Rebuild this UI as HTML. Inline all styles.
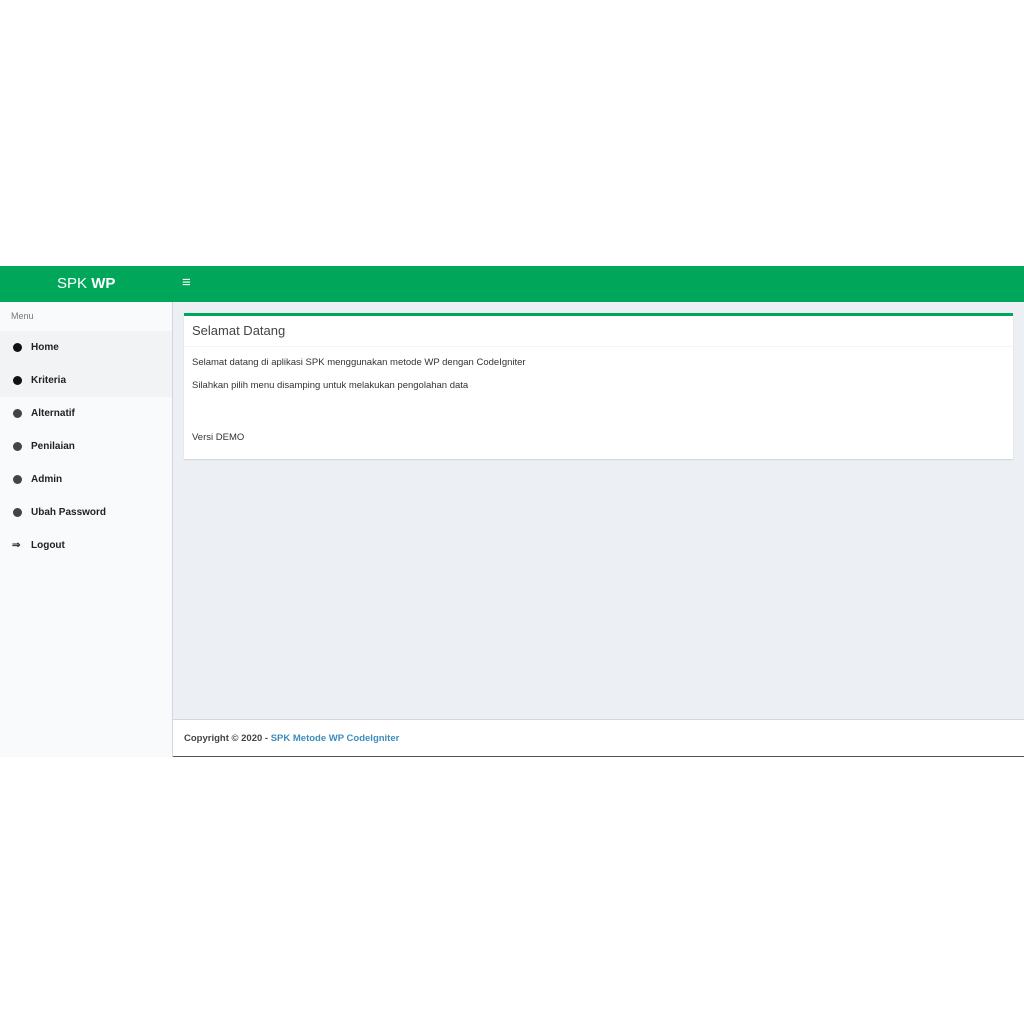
<!DOCTYPE html>
<html><head><style>
body{margin:0;width:1024px;height:1024px;background:#fff;font-family:"Liberation Sans",sans-serif;position:relative;overflow:hidden}
.hdr{position:absolute;top:266px;left:0;width:1024px;height:36px;background:#00a65a}
.logo{position:absolute;left:57px;top:9px;color:#fff;font-size:15px}
.burg{position:absolute;left:182px;top:8px;color:#fff;font-size:15px}
.side{position:absolute;top:302px;left:0;width:172px;height:455px;background:#f9fafc;border-right:1px solid #d2d6de}
.menu{font-size:9px;color:#777;padding:9px 11px;height:11px}
.item{height:33px;line-height:33px;font-size:10px;color:#222;font-weight:bold;position:relative;padding-left:31px}
.item.act{background:#f2f3f5}
.dot{position:absolute;left:13px;top:12px;width:9px;height:9px;border-radius:50%;background:#444}
.act .dot{background:#111}
.main{position:absolute;top:302px;left:173px;width:851px;height:417px;background:#ecf0f5}
.box{position:absolute;left:11px;top:11px;width:829px;height:143px;background:#fff;border-top:3px solid #00a65a;box-shadow:0 1px 1px rgba(0,0,0,.12)}
.bt{font-size:13px;color:#444;padding:7px 8px;height:16px;border-bottom:1px solid #f4f4f4}
.bb{font-size:9.5px;color:#333;padding:10px 8px}
.bb p{margin:0 0 12px}
.foot{position:absolute;top:719px;left:173px;width:851px;height:38px;background:#fff;border-top:1px solid #d2d6de;border-bottom:1px solid #555;font-size:9.5px;font-weight:bold;color:#444;line-height:37px;padding-left:11px;box-sizing:border-box}
.foot span{color:#3c8dbc}
</style></head><body>
<div class="hdr"><div class="logo">SPK <b>WP</b></div><div class="burg">≡</div></div>
<div class="side">
<div class="menu">Menu</div>
<div class="item act"><span class="dot"></span>Home</div>
<div class="item act"><span class="dot"></span>Kriteria</div>
<div class="item"><span class="dot"></span>Alternatif</div>
<div class="item"><span class="dot"></span>Penilaian</div>
<div class="item"><span class="dot"></span>Admin</div>
<div class="item"><span class="dot"></span>Ubah Password</div>
<div class="item"><span style="position:absolute;left:12px;font-size:10px">⇒</span>Logout</div>
</div>
<div class="main"><div class="box">
<div class="bt">Selamat Datang</div>
<div class="bb"><p>Selamat datang di aplikasi SPK menggunakan metode WP dengan CodeIgniter</p><p>Silahkan pilih menu disamping untuk melakukan pengolahan data</p><p style="margin-top:41px">Versi DEMO</p></div>
</div></div>
<div class="foot">Copyright © 2020 - <span>SPK Metode WP CodeIgniter</span></div>
</body></html>
